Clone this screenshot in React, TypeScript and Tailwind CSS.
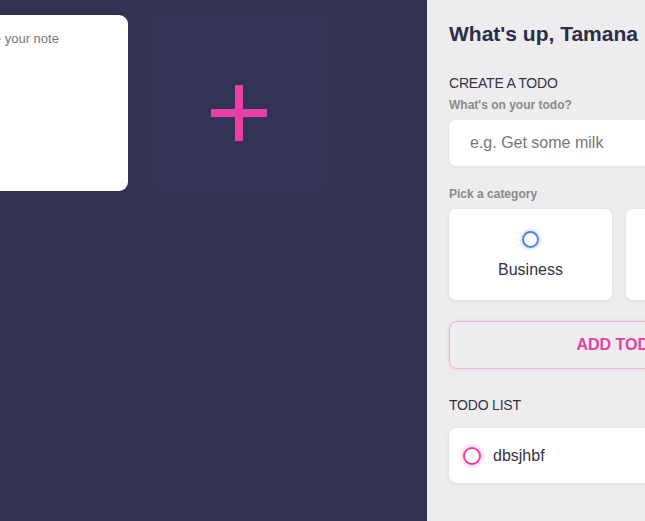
import React from 'react';

const categories = ['Business', 'Personal'];

const App: React.FC = () => {
  return (
    <div className="flex h-[521px] w-[645px] overflow-hidden bg-[#313152] font-['Liberation_Sans',Arial,sans-serif]">
      {/* notes area */}
      <div className="w-[427px] shrink-0 overflow-hidden">
        <div className="ml-[-50px] flex gap-[22px] pt-[15px]">
          <div className="h-[176px] w-[178px] shrink-0 rounded-[9px] bg-white px-[21px] pt-[16px]">
            <textarea
              className="h-full w-full resize-none bg-transparent text-[13px] leading-[16px] text-[#333] outline-none placeholder:text-[#777]"
              placeholder="Write your note"
            />
          </div>
          <button className="flex h-[176px] w-[178px] shrink-0 items-center justify-center rounded-[6px] bg-[#333355] pt-[20px]">
            <span className="relative block h-[56px] w-[56px]">
              <span className="absolute left-[24px] top-0 h-[56px] w-[8px] bg-[#e940a8]" />
              <span className="absolute left-0 top-[24px] h-[8px] w-[56px] bg-[#e940a8]" />
            </span>
          </button>
        </div>
      </div>

      {/* todo panel */}
      <div className="w-[384px] shrink-0 bg-[#ededed] px-[22px] pt-[22px] text-[#2f2f4a]">
        <h1 className="whitespace-nowrap text-[21px] font-bold leading-[24px] text-[#2c2c4c]">What's up, Tamana</h1>

        <h2 className="mt-[29px] text-[14px] leading-[16px] tracking-[-0.2px] text-[#333348]">CREATE A TODO</h2>
        <p className="mt-[7px] text-[12px] font-bold leading-[14px] text-[#8a8a8a]">What's on your todo?</p>
        <input
          className="mt-[8px] h-[46px] w-[340px] rounded-[7px] bg-white px-[21px] text-[16px] text-[#333] shadow-[0_1px_3px_rgba(0,0,0,0.06)] outline-none placeholder:text-[#777]"
          placeholder="e.g. Get some milk"
        />

        <p className="mt-[21px] text-[12px] font-bold leading-[14px] text-[#8a8a8a]">Pick a category</p>
        <div className="mt-[8px] flex gap-[14px]">
          {categories.map((c, i) => (
            <label
              key={c}
              className="flex h-[91px] w-[163px] shrink-0 flex-col items-center rounded-[7px] bg-white pt-[22px] shadow-[0_1px_4px_rgba(0,0,0,0.08)]"
            >
              <span
                className={
                  i === 0
                    ? 'block h-[17px] w-[17px] rounded-full border-2 border-[#4a86e8] shadow-[0_0_4px_rgba(59,130,246,0.5)]'
                    : 'block h-[17px] w-[17px] rounded-full border-2 border-[#e940a8] shadow-[0_0_4px_rgba(233,64,168,0.5)]'
                }
              />
              <span className="mt-[12px] text-[16px] leading-[20px] text-[#333345]">{c}</span>
            </label>
          ))}
        </div>

        <button className="mt-[21px] h-[48px] w-[340px] rounded-[8px] border border-[#f0b3d5] text-[16px] font-bold text-[#e940a8] shadow-[0_0_3px_rgba(233,64,168,0.25)]">
          ADD TODO
        </button>

        <h2 className="mt-[28px] text-[14px] leading-[16px] tracking-[-0.2px] text-[#333348]">TODO LIST</h2>
        <div className="mt-[15px] flex h-[55px] w-[340px] items-center gap-[12px] rounded-[8px] bg-white px-[14px] shadow-[0_1px_4px_rgba(0,0,0,0.08)]">
          <span className="block h-[18px] w-[18px] rounded-full border-2 border-[#e940a8] shadow-[0_0_5px_rgba(233,64,168,0.6)]" />
          <span className="text-[16px] text-[#333345]">dbsjhbf</span>
        </div>
      </div>
    </div>
  );
};

export default App;
